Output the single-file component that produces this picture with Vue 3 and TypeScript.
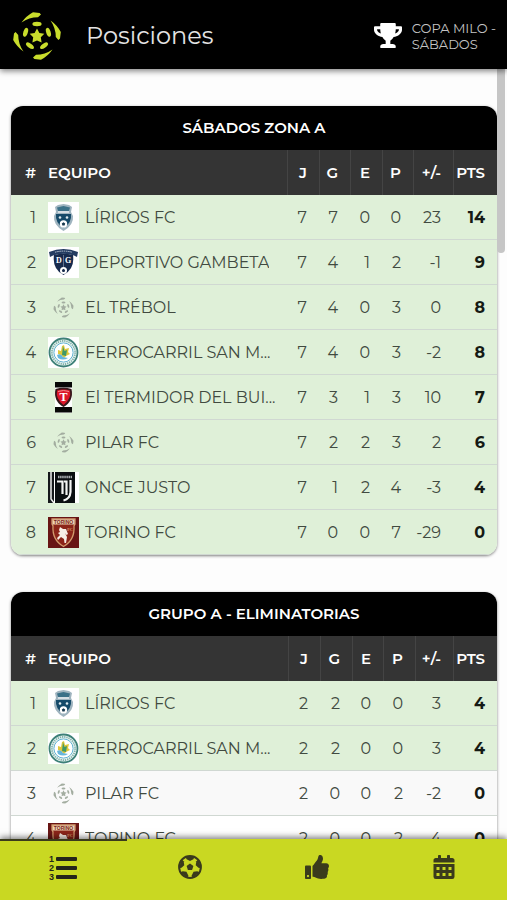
<script setup lang="ts">
import { computed, ref } from 'vue'

type Crest = 'liricos' | 'gambeta' | 'generic' | 'ferro' | 'termidor' | 'once' | 'torino'

interface Row {
  name: string
  crest: Crest
  stats: number[]
  points: number
  qualified: boolean
}

interface Group {
  title: string
  widths: number[]
  rows: Row[]
}

const headings = ['J', 'G', 'E', 'P', '+/-']

function team(name: string, crest: Crest, stats: number[], points: number, qualified = true): Row {
  return { name, crest, stats, points, qualified }
}

const groups: Group[] = [
  {
    title: 'SÁBADOS ZONA A',
    widths: [32, 31, 32, 31, 40],
    rows: [
      team('LÍRICOS FC', 'liricos', [7, 7, 0, 0, 23], 14),
      team('DEPORTIVO GAMBETA', 'gambeta', [7, 4, 1, 2, -1], 9),
      team('EL TRÉBOL', 'generic', [7, 4, 0, 3, 0], 8),
      team('FERROCARRIL SAN M...', 'ferro', [7, 4, 0, 3, -2], 8),
      team('El TERMIDOR DEL BUI...', 'termidor', [7, 3, 1, 3, 10], 7),
      team('PILAR FC', 'generic', [7, 2, 2, 3, 2], 6),
      team('ONCE JUSTO', 'once', [7, 1, 2, 4, -3], 4),
      team('TORINO FC', 'torino', [7, 0, 0, 7, -29], 0),
    ],
  },
  {
    title: 'GRUPO A - ELIMINATORIAS',
    widths: [32, 32, 31, 32, 38],
    rows: [
      team('LÍRICOS FC', 'liricos', [2, 2, 0, 0, 3], 4),
      team('FERROCARRIL SAN M...', 'ferro', [2, 2, 0, 0, 3], 4),
      team('PILAR FC', 'generic', [2, 0, 0, 2, -2], 0, false),
      team('TORINO FC', 'torino', [2, 0, 0, 2, -4], 0, false),
    ],
  },
]

const active = ref(0)
const quarterTurns = [0, 90, 180, 270]
const fifthTurns = [0, 72, 144, 216, 288]

const scrolled = ref(0)
const thumbStyle = computed(() => ({ transform: `translateY(${scrolled.value}px)` }))

function onScroll(event: Event) {
  const el = event.target as HTMLElement
  scrolled.value = Math.round((el.scrollTop / el.scrollHeight) * el.clientHeight)
}
</script>

<template>
  <div class="app">
    <svg class="sprite" aria-hidden="true">
      <defs>
        <symbol id="ball-mark" viewBox="-25 -25 50 50">
          <path
            v-for="turn in quarterTurns"
            :key="'q' + turn"
            :transform="`rotate(${turn})`"
            d="M-15.500 -13.500 Q-11 -20 -4 -23.800 L2.600 -23 L4 -21.400 L1 -18.800 Q-8 -18.800 -15.500 -13.500Z"
          />
          <ellipse
            v-for="turn in fifthTurns"
            :key="'f' + turn"
            :transform="`rotate(${turn})`"
            cx="0"
            cy="-12"
            rx="4.600"
            ry="2.200"
          />
          <path
            d="M0 -7.500 L2.400 -3 L7.300 -2.300 L3.800 1.300 L4.600 6.400 L0 4.600 L-4.600 6.400 L-3.800 1.300 L-7.300 -2.300 L-2.400 -3Z"
          />
        </symbol>

        <symbol id="crest-generic" viewBox="0 0 31 31">
          <use href="#ball-mark" x="5" y="5" width="21" height="21" />
        </symbol>

        <symbol id="crest-liricos" viewBox="0 0 31 31">
          <rect width="31" height="31" fill="#fff" />
          <path d="M7 5 L10 3 L15.500 2 L21 3 L24 5 L23 10 L25 14 Q26 23 15.500 29 Q5 23 6 14 L8 10Z" fill="#9fb4bf" />
          <path d="M9 5.500 L15.500 4 L22 5.500 L21 9 H10Z" fill="#3b7188" />
          <path d="M8 12 H23 Q24 21 15.500 26 Q7 21 8 12Z" fill="#154a69" />
          <path d="M10 10 H21" stroke="#e8eef0" stroke-width="1.400" />
          <circle cx="12" cy="15.500" r="1.300" fill="#dce9ee" />
          <circle cx="19" cy="15.500" r="1.300" fill="#dce9ee" />
          <circle cx="15.500" cy="22" r="3.700" fill="#fff" />
          <path d="M15.500 20.200 L17.200 21.500 L16.600 23.500 H14.400 L13.800 21.500Z" fill="#17394e" />
        </symbol>

        <symbol id="crest-gambeta" viewBox="0 0 31 31">
          <rect width="31" height="31" fill="#fff" />
          <path d="M6 8 Q15.500 5 25 8 Q27 22 15.500 28 Q4 22 6 8Z" fill="#182b4d" />
          <path d="M1 5 Q15.500 -1 30 5 L29 10 L26 8.500 Q15.500 5 5 8.500 L2 10Z" fill="#243c61" />
          <path d="M7 5.200 Q15.500 3 24 5.200" fill="none" stroke="#b9c5d4" stroke-width="1" stroke-dasharray="1.500 0.700" />
          <path d="M15.500 8 V20" stroke="#64748f" stroke-width="1" />
          <text x="11" y="16" class="crest-initial">D</text>
          <text x="20" y="16" class="crest-initial">G</text>
          <circle cx="15.500" cy="23.500" r="3.500" fill="#fff" />
          <path d="M15.500 21.800 L17.100 23 L16.500 25 H14.500 L13.900 23Z" fill="#182b4d" />
        </symbol>

        <symbol id="crest-ferro" viewBox="0 0 31 31">
          <rect width="31" height="31" fill="#fff" />
          <circle cx="15.500" cy="15.500" r="14" fill="#e9f4f1" stroke="#3d8078" stroke-width="1.800" />
          <circle cx="15.500" cy="15.500" r="11.600" fill="none" stroke="#7fb0ab" stroke-width="1.800" stroke-dasharray="1.300 0.900" />
          <circle cx="15.500" cy="15.500" r="9.600" fill="#fff" stroke="#65b4d4" stroke-width="1" />
          <path d="M10 13 L13 14 L14 9 L16 8 L17 12 L21 11 L20 15 L22 17 L18 19 L16 21 L13 18 L10 17Z" fill="#e0c93c" />
          <path d="M15 9 L16.500 14 L19 13 L18 19 L14 18Z" fill="#3f9868" />
          <path d="M9 18 Q13 16 15 20 L20 21 Q15 24 10 21Z" fill="#67b6dc" />
        </symbol>

        <symbol id="crest-termidor" viewBox="0 0 31 31">
          <rect x="7" width="17" height="31" fill="#fff" />
          <rect x="7" width="17" height="5.500" fill="#080808" />
          <rect x="7" y="25" width="17" height="5.500" fill="#080808" />
          <path d="M7.500 7 Q15.500 4.500 23.500 7 Q26 19 15.500 25 Q5 19 7.500 7Z" fill="#35171b" />
          <path d="M9 8.500 Q15.500 6.500 22 8.500 Q23.500 17 15.500 23 Q7.500 17 9 8.500Z" fill="#dc1428" />
          <path d="M10 9.500 Q15.500 7.500 21 9.500" fill="none" stroke="#f28b8b" stroke-width="1" />
          <text x="15.500" y="19" class="crest-letter">T</text>
        </symbol>

        <symbol id="crest-once" viewBox="0 0 31 31">
          <rect width="31" height="31" fill="#fff" />
          <rect width="6" height="31" fill="#15181b" />
          <path d="M3 0 V27 L6 31" fill="none" stroke="#eee" stroke-width="1.500" />
          <rect x="7" width="20" height="31" fill="#0b0e11" />
          <path d="M10 5 H24" stroke="#a8adb0" stroke-width="2.400" stroke-dasharray="1.500 0.600" />
          <path d="M9 9.500 H14.500 V22 M16 9.500 H18.500 V23 M22.500 8 V20 Q22 27 15.500 28.500" fill="none" stroke="#f5f5f5" stroke-width="2.200" />
        </symbol>

        <symbol id="crest-torino" viewBox="0 0 31 31">
          <rect width="31" height="31" fill="#681514" />
          <path d="M4 2 H27 V7 L26 9 Q27 23 15.500 29.500 Q4 23 5 9 L4 7Z" fill="#8c2519" stroke="#d29b6c" stroke-width="1.300" />
          <rect x="4.500" y="2.500" width="22" height="5" fill="#ecd4b4" />
          <text x="15.500" y="7" class="crest-banner">TORINO</text>
          <path d="M12 10 L15 12 L18 12 L20 17 L18.500 18 L17 16 L19 20 L18 26 L16.500 26 L16 22 L13 20 L10 23 L9 21 L12 18 L10 16 L12 15 L11 13Z" fill="#f7eee5" />
          <text x="22" y="14" class="crest-small">FC</text>
        </symbol>
      </defs>
    </svg>

    <header class="topbar">
      <svg class="logo" aria-hidden="true"><use href="#ball-mark" /></svg>
      <h1>Posiciones</h1>
      <button class="tournament" type="button">
        <svg class="trophy" viewBox="0 0 576 512" aria-hidden="true">
          <path
            d="M552 64H448V24c0-13.300-10.700-24-24-24H152c-13.300 0-24 10.700-24 24v40H24C10.700 64 0 74.700 0 88v56c0 35.700 22.500 72.400 61.900 100.700 31.500 22.700 69.800 37.100 110 41.700C203.300 338.500 240 360 240 360v72h-48c-35.300 0-64 20.700-64 56v12c0 6.600 5.400 12 12 12h296c6.600 0 12-5.400 12-12v-12c0-35.300-28.700-56-64-56h-48v-72s36.700-21.500 68.100-73.600c40.300-4.600 78.600-19 110-41.700 39.300-28.300 61.900-65 61.900-100.700V88c0-13.300-10.700-24-24-24zM99.300 192.800C74.900 175.200 64 155.600 64 144v-16h64.200c1 32.600 5.800 61.200 12.800 86.200-15.100-5.200-29.200-12.400-41.700-21.400zM512 144c0 16.100-17.700 36.100-35.300 48.800-12.500 9-26.700 16.200-41.800 21.400 7-25 11.800-53.600 12.800-86.200H512v16z"
          />
        </svg>
        <span>COPA MILO -<br />SÁBADOS</span>
      </button>
    </header>

    <div class="body">
      <main class="scroller" @scroll="onScroll">
        <section v-for="group in groups" :key="group.title" class="card">
          <h2>{{ group.title }}</h2>
          <table :aria-label="group.title">
            <colgroup>
              <col class="col-rank" />
              <col />
              <col v-for="(width, i) in group.widths" :key="i" :style="{ width: width + 'px' }" />
              <col class="col-points" />
            </colgroup>
            <thead>
              <tr>
                <th scope="col">#</th>
                <th scope="col" class="team">EQUIPO</th>
                <th v-for="heading in headings" :key="heading" scope="col">{{ heading }}</th>
                <th scope="col">PTS</th>
              </tr>
            </thead>
            <tbody>
              <tr v-for="(row, index) in group.rows" :key="row.name" :class="{ qualified: row.qualified }">
                <td>{{ index + 1 }}</td>
                <td class="team">
                  <div class="team-line">
                    <svg class="crest" aria-hidden="true"><use :href="'#crest-' + row.crest" /></svg>
                    <span class="team-name">{{ row.name }}</span>
                  </div>
                </td>
                <td v-for="(value, i) in row.stats" :key="i">{{ value }}</td>
                <td class="points">{{ row.points }}</td>
              </tr>
            </tbody>
          </table>
        </section>
      </main>
      <div class="thumb" :style="thumbStyle"></div>
    </div>

    <nav class="tabs">
      <button type="button" aria-label="Posiciones" :class="{ active: active === 0 }" @click="active = 0">
        <svg class="icon-list" viewBox="0 0 28 28" aria-hidden="true">
          <text x="0" y="8">1</text>
          <text x="0" y="17">2</text>
          <text x="0" y="26">3</text>
          <rect x="7" y="3" width="21" height="4" rx="1" />
          <rect x="7" y="12" width="21" height="4" rx="1" />
          <rect x="7" y="21" width="21" height="4" rx="1" />
        </svg>
      </button>
      <button type="button" aria-label="Partidos" :class="{ active: active === 1 }" @click="active = 1">
        <svg class="icon-ball" viewBox="-12 -12 24 24" aria-hidden="true">
          <circle r="10.900" fill="none" stroke="currentColor" stroke-width="2" />
          <path d="M0 -3.600 L3.400 -1.100 L2.100 2.900 H-2.100 L-3.400 -1.100Z" />
          <path
            v-for="turn in fifthTurns"
            :key="turn"
            :transform="`rotate(${turn})`"
            d="M-4.600 -10.200 H4.600 L3.400 -7.800 L0 -6 L-3.400 -7.800Z"
          />
        </svg>
      </button>
      <button type="button" aria-label="Votaciones" :class="{ active: active === 2 }" @click="active = 2">
        <svg class="icon-thumb" viewBox="0 0 512 512" aria-hidden="true">
          <path
            d="M104 224H24c-13.255 0-24 10.745-24 24v240c0 13.255 10.745 24 24 24h80c13.255 0 24-10.745 24-24V248c0-13.255-10.745-24-24-24zM64 472c-13.255 0-24-10.745-24-24s10.745-24 24-24 24 10.745 24 24-10.745 24-24 24zM384 81.452c0 42.416-25.970 66.208-33.277 94.548h101.723c33.397 0 59.397 27.746 59.553 58.098.084 17.938-7.546 37.249-19.439 49.197l-.11.11c9.836 23.337 8.237 56.037-9.308 79.469 8.681 25.895-.069 57.704-16.382 74.757 4.298 17.598 2.244 32.575-6.148 44.632C440.202 511.587 389.616 512 346.839 512l-2.845-.001c-48.287-.017-87.806-17.598-119.560-31.725-15.957-7.099-36.821-15.887-52.651-16.178-6.540-.12-11.783-5.457-11.783-11.998v-213.770c0-3.200 1.282-6.271 3.558-8.521 39.614-39.144 56.648-80.587 89.117-113.111 14.804-14.832 20.188-37.236 25.393-58.902C282.515 39.293 291.817 0 312 0c24 0 72 8 72 81.452z"
          />
        </svg>
      </button>
      <button type="button" aria-label="Calendario" :class="{ active: active === 3 }" @click="active = 3">
        <svg class="icon-calendar" viewBox="0 0 448 512" aria-hidden="true">
          <path
            fill-rule="evenodd"
            d="M0 192H448V464Q448 512 400 512H48Q0 512 0 464ZM64 256V320H128V256ZM192 256V320H256V256ZM320 256V320H384V256ZM64 384V448H128V384ZM192 384V448H256V384ZM320 384V448H384V384Z"
          />
          <path
            d="M400 64h-48V16c0-8.800-7.200-16-16-16h-32c-8.800 0-16 7.200-16 16v48H160V16c0-8.800-7.200-16-16-16h-32c-8.800 0-16 7.200-16 16v48H48C21.500 64 0 85.500 0 112v48h448v-48c0-26.500-21.500-48-48-48z"
          />
        </svg>
      </button>
    </nav>
  </div>
</template>

<style>
body {
  background: #fdfdfd;
}
</style>

<style scoped>
.app {
  display: flex;
  flex-direction: column;
  height: 100vh;
  color: #414a40;
  font-family: Montserrat, Inter, 'Open Sans', sans-serif;
  font-size: 16px;
}

.sprite {
  position: absolute;
  width: 0;
  height: 0;
}

.topbar {
  z-index: 1;
  display: flex;
  flex: none;
  align-items: center;
  height: 69px;
  padding: 2px 11px 0 12px;
  box-sizing: border-box;
  background: #000;
  box-shadow: 0 2px 6px rgba(0, 0, 0, 0.5);
}

.logo {
  width: 50px;
  height: 50px;
  fill: #c9dc2c;
}

h1 {
  flex: 1;
  margin: 0 0 0 24px;
  color: #e4e4e4;
  font-size: 24px;
  font-weight: 400;
}

.tournament {
  display: flex;
  align-items: center;
  gap: 10px;
  padding: 0;
  border: 0;
  background: none;
  color: #c4c4c4;
  font: inherit;
  font-size: 13px;
  line-height: 16px;
  text-align: left;
  white-space: nowrap;
}

.trophy {
  width: 28px;
  height: 25px;
  fill: #fff;
}

.body {
  position: relative;
  flex: 1;
  min-height: 0;
}

.scroller {
  display: flex;
  flex-direction: column;
  gap: 37px;
  height: 100%;
  padding: 37px 10px 37px 11px;
  box-sizing: border-box;
  overflow-y: auto;
  scrollbar-width: none;
}

.thumb {
  position: absolute;
  top: 0;
  right: 2px;
  width: 8px;
  height: 184px;
  border-radius: 0 0 4px 4px;
  background: #c6c6c6;
}

.card {
  flex: none;
  border-radius: 12px;
  background: #fff;
  box-shadow: 0 1px 3px rgba(0, 0, 0, 0.5);
  overflow: hidden;
}

h2 {
  margin: 0;
  background: #000;
  color: #fff;
  font-size: 15px;
  font-weight: 600;
  line-height: 44px;
  text-align: center;
}

table {
  width: 100%;
  border-collapse: separate;
  border-spacing: 0;
  table-layout: fixed;
}

.col-rank {
  width: 37px;
}

.col-points {
  width: 44px;
}

th,
td {
  height: 45px;
  padding: 0 12px 0 0;
  box-sizing: border-box;
  text-align: right;
  white-space: nowrap;
}

th {
  border-left: 1px solid #444;
  background: #343434;
  color: #fff;
  font-size: 15px;
  font-weight: 600;
}

th:first-child,
th.team {
  border-left: 0;
}

td {
  border-bottom: 1px solid #d0d8d2;
}

tbody tr:nth-child(odd) {
  background: #f9f9f9;
}

tbody tr.qualified {
  background: #dff0d8;
}

.team {
  padding: 0;
  text-align: left;
}

.team-line {
  display: flex;
  align-items: center;
  gap: 6px;
}

.crest {
  flex: none;
  width: 31px;
  height: 31px;
  fill: #a3ada0;
}

.team-name {
  overflow: hidden;
  text-overflow: ellipsis;
}

.points {
  color: #151a14;
  font-weight: 700;
}

.crest-initial,
.crest-letter,
.crest-banner,
.crest-small {
  fill: #fff;
  font-family: 'Liberation Serif', serif;
  font-weight: 700;
  text-anchor: middle;
}

.crest-initial {
  font-size: 8px;
}

.crest-letter {
  font-size: 12px;
}

.crest-banner {
  fill: #7b2518;
  font-family: 'Liberation Sans', sans-serif;
  font-size: 5px;
}

.crest-small {
  fill: #dfa579;
  font-size: 4px;
}

.tabs {
  z-index: 1;
  display: grid;
  flex: none;
  grid-template-columns: repeat(4, 1fr);
  height: 61px;
  background: #c9d822;
  box-shadow: 0 -2px 6px rgba(0, 0, 0, 0.5);
}

.tabs button {
  display: flex;
  align-items: center;
  justify-content: center;
  padding: 0 0 8px;
  border: 0;
  border-top: 2px solid transparent;
  background: none;
  color: #3a3b1c;
}

.tabs button.active {
  padding-bottom: 6px;
  border-top-color: #3a3b1c;
  color: #24251a;
}

.tabs svg {
  height: 24px;
  fill: currentColor;
}

.tabs .icon-list {
  width: 28px;
  height: 28px;
  font-family: 'Liberation Sans', sans-serif;
  font-size: 9px;
  font-weight: 700;
}

.icon-ball,
.icon-thumb {
  width: 24px;
}

.icon-calendar {
  width: 22px;
}
</style>
